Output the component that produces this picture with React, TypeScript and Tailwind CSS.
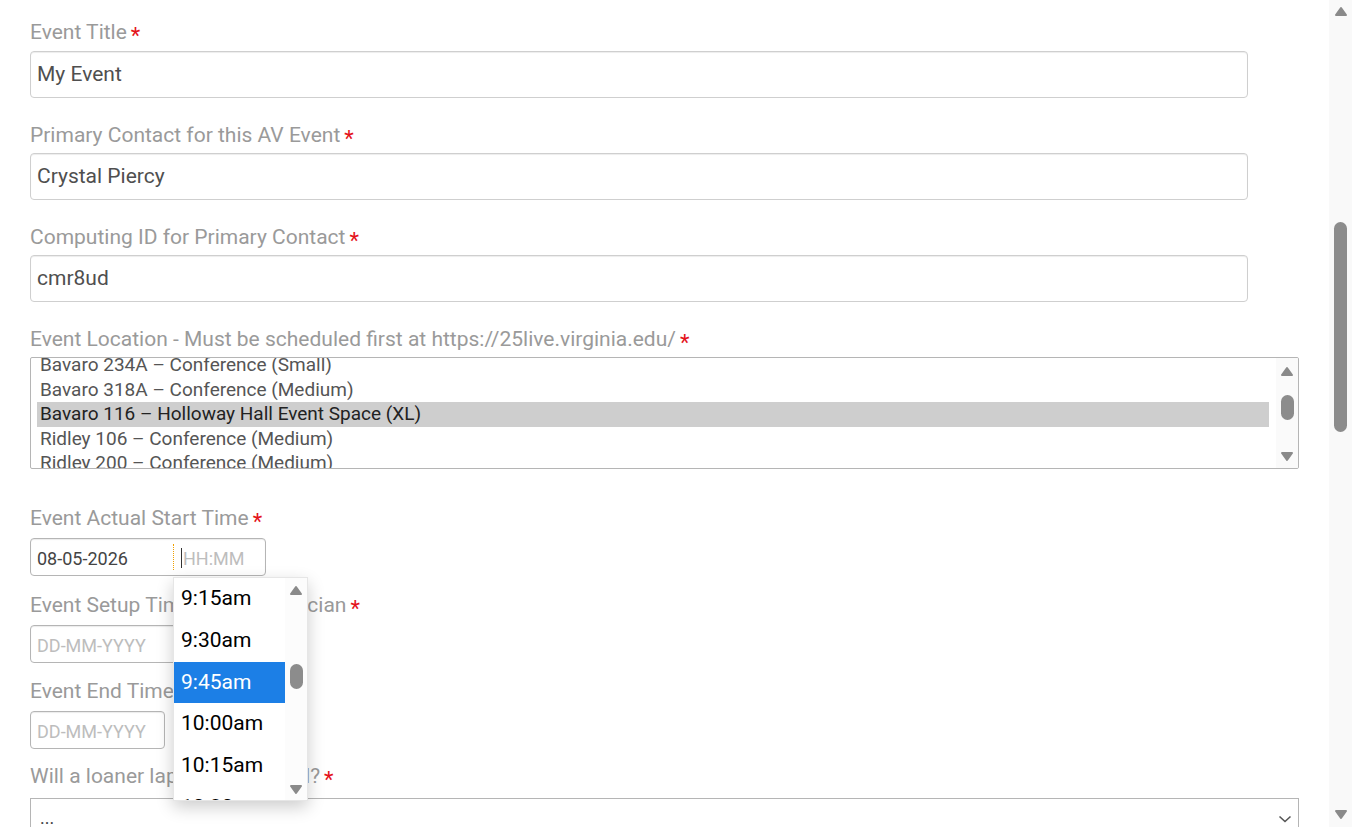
import clsx from "clsx"

const locations = [
    "Bavaro 234A – Conference (Small)",
    "Bavaro 318A – Conference (Medium)",
    "Bavaro 116 – Holloway Hall Event Space (XL)",
    "Ridley 106 – Conference (Medium)",
    "Ridley 200 – Conference (Medium)",
]

const times = ["9:15am", "9:30am", "9:45am", "10:00am", "10:15am", "10:30am"]

export default function App() {
    return (
        <div className="flex h-[827px] w-[1352px] overflow-hidden bg-white font-['Roboto',sans-serif]">
            <div className="flex-1 overflow-hidden pl-[30px] pr-[30px] pt-[20px]">

                {/* Title and contacts */}
                <Label className="mb-[7px]">Event Title</Label>
                <TextInput value="My Event" />

                <Label className="mt-[25px] mb-[6px]">Primary Contact for this AV Event</Label>
                <TextInput value="Crystal Piercy" />

                <Label className="mt-[25px] mb-[6px]">Computing ID for Primary Contact</Label>
                <TextInput value="cmr8ud" />

                {/* Location list */}
                <Label className="mt-[25px] mb-[6px]">Event Location - Must be scheduled first at https://25live.virginia.edu/</Label>
                <LocationList />

                {/* Times */}
                <Label className="mt-[37px] mb-[8px]">Event Actual Start Time</Label>
                <div className="relative w-[236px]">
                    <div className="flex h-[38px] w-[236px] rounded border border-[#b5b5b5] shadow-[inset_0_1px_1px_rgba(0,0,0,0.08)]">
                        <div className="flex w-[142px] items-center pl-[6px] pt-[2px] text-[18px] text-[#444]">08-05-2026</div>
                        <div className="my-[5px] flex flex-1 items-center border-l border-dotted border-[#f0a000] pl-[7px] pt-[2px] text-[18px] text-[#bdbdbd]">
                            <span className="mr-px h-[20px] w-px bg-[#333]" />
                            HH:MM
                        </div>
                    </div>
                    <TimeMenu />
                </div>

                <Label className="mt-[17px] mb-[8px]">Event Setup Time for a Technician</Label>
                <div className="flex h-[38px] w-[236px] rounded border border-[#b5b5b5] shadow-[inset_0_1px_1px_rgba(0,0,0,0.08)]">
                    <div className="flex w-[142px] items-center pl-[6px] pt-[2px] text-[18px] text-[#bdbdbd]">DD-MM-YYYY</div>
                </div>

                <Label className="mt-[16px] mb-[8px]">Event End Time</Label>
                <div className="flex h-[38px] w-[135px] items-center rounded border border-[#b5b5b5] pl-[6px] pt-[2px] text-[18px] text-[#bdbdbd] shadow-[inset_0_1px_1px_rgba(0,0,0,0.08)]">
                    DD-MM-YYYY
                </div>

                <Label className="mt-[15px] mb-[10px]">Will a loaner laptop be needed?</Label>
                <div className="flex h-[47px] items-center justify-between border border-[#b5b5b5] pl-[9px] pr-[6px] text-[18px] text-[#444]">
                    <span className="mb-[8px]">...</span>
                    <svg viewBox="0 0 14 8" className="mb-[6px] h-[8px] w-[14px]">
                        <path d="M1.5 1.5 7 6.5l5.5-5" fill="none" stroke="#555" strokeWidth="1.6" />
                    </svg>
                </div>
            </div>

            {/* Page scrollbar */}
            <div className="flex w-[23px] flex-col items-center bg-[#f9f9f9]">
                <Arrow className="mt-[6px] h-[11px] w-[14px]" />
                <div className="mt-[205px] h-[210px] w-[13px] rounded-full bg-[#8c8c8c]" />
                <Arrow down className="mt-[377px] h-[11px] w-[14px]" />
            </div>
        </div>
    )
}

function Label({ children, className }: { children: React.ReactNode; className?: string }) {
    return (
        <div className={clsx("h-6 whitespace-nowrap text-[21px] leading-6 text-[#9a9a9a]", className)}>
            {children}
            <span className="ml-[4px] inline-block translate-y-[4px] text-[22px] leading-none text-[#e4141b]">*</span>
        </div>
    )
}

function TextInput({ value }: { value: string }) {
    return (
        <div className="flex h-[47px] w-[1218px] items-center rounded border border-[#cfcfcf] pl-[6px] text-[21px] text-[#4f4f4f] shadow-[inset_0_1px_1px_rgba(0,0,0,0.075)]">
            {value}
        </div>
    )
}

function Arrow({ down, className }: { down?: boolean; className?: string }) {
    return (
        <svg viewBox="0 0 14 11" className={className}>
            <path
                d={down ? "M2 2h10L7 9z" : "M7 2l5 7H2z"}
                fill="#8a8a8a"
                stroke="#8a8a8a"
                strokeWidth="2"
                strokeLinejoin="round"
            />
        </svg>
    )
}

function LocationList() {
    return (
        <div className="flex h-[112px] overflow-hidden rounded-[2px] border border-[#b5b5b5]">
            <div className="flex-1 overflow-hidden pl-[6px] pr-[7px]">
                <div className="-mt-[5px]">
                    {locations.map((loc, i) => (
                        <div
                            key={loc}
                            className={clsx(
                                "h-[24.5px] whitespace-nowrap px-[3px] text-[19px] leading-[24.5px]",
                                i === 2 ? "bg-[#cecece] text-[#222]" : "text-[#555]"
                            )}
                        >
                            {loc}
                        </div>
                    ))}
                </div>
            </div>
            <div className="flex w-[22px] flex-col items-center bg-[#fafafa]">
                <Arrow className="mt-[8px] h-[11px] w-[14px]" />
                <div className="mt-[18px] h-[25px] w-[13px] rounded-full bg-[#8c8c8c]" />
                <Arrow down className="mt-[31px] h-[11px] w-[14px]" />
            </div>
        </div>
    )
}

function TimeMenu() {
    return (
        <div className="absolute left-[143px] top-[39px] z-10 flex h-[224px] w-[135px] overflow-hidden border border-[#e6e6e6] bg-white shadow-[0_6px_16px_rgba(0,0,0,0.2)]">
            <div className="w-[111px]">
                {times.map(t => (
                    <div
                        key={t}
                        className={clsx(
                            "flex h-[41.75px] items-center pl-[7px] text-[21px]",
                            t === "9:45am" ? "bg-[#1c7fe6] text-white" : "text-black"
                        )}
                    >
                        {t}
                    </div>
                ))}
            </div>
            <div className="flex flex-1 flex-col items-center bg-[#fcfcfc]">
                <Arrow className="mt-[7px] h-[11px] w-[14px]" />
                <div className="mt-[68px] h-[25px] w-[13px] rounded-full bg-[#8c8c8c]" />
                <Arrow down className="mt-[95px] h-[11px] w-[14px]" />
            </div>
        </div>
    )
}
